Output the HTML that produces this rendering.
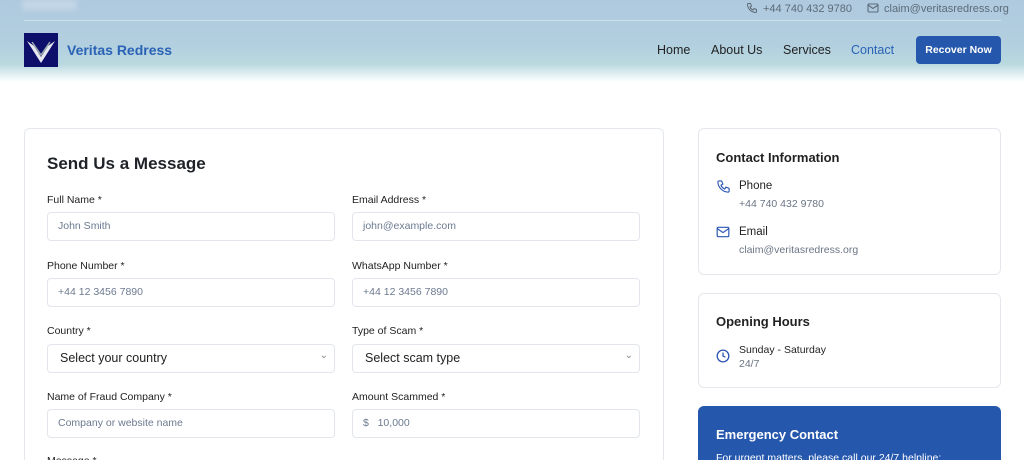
<!DOCTYPE html>
<html style="height:460px;overflow:hidden"><head><meta charset="utf-8"><style>
*{box-sizing:border-box;margin:0;padding:0}
body{width:1024px;height:460px;overflow:hidden;background:#fff;font-family:"Liberation Sans",sans-serif;position:relative}
.hdr{position:absolute;left:0;top:0;width:1024px;height:82px;background:linear-gradient(180deg,#afc9df 0%,#b2cfdf 55%,#b9d9df 78%,#fff 100%)}
.a{position:absolute}
.line{left:24px;top:20px;width:977px;height:1px;background:#cfe0ea}
.logo{left:24px;top:33px;width:34px;height:34px;background:#0d0f6b}
.brand{left:67px;top:42px;font-size:14px;font-weight:bold;color:#2a62b5}
.nav{top:43px;font-size:12.5px;color:#222}
.btn{left:916px;top:36px;width:85px;height:28px;background:#2557ad;border-radius:4px;color:#fff;font-size:10.5px;font-weight:bold;text-align:center;line-height:28px}
.tc{top:3px;font-size:11px;color:#5c6b78}
.card{background:#fff;border:1px solid #e4e7ec;border-radius:6px}
.lbl{font-size:10.5px;color:#222}
.in{width:288px;height:29px;border:1px solid #e2e6ec;border-radius:4px;font-size:10.5px;color:#6c7a90;padding-left:10px;line-height:27px;background:#fff}
.sel{color:#222;font-size:12.5px;padding-left:12px}
.sel:after{content:"⌄";position:absolute;right:6px;top:-3px;font-size:10px;color:#888}
.h3{font-size:13px;font-weight:bold;color:#222}
.t1{font-size:11.5px;color:#222}
.t2{font-size:10.5px;color:#6b7585}
</style></head><body>
<div class="hdr"></div>
<div class="a" style="left:22px;top:0;width:55px;height:10px;background:#c4d6e6;filter:blur(3px)"></div>
<div class="a line"></div>
<svg class="a" style="left:746px;top:2px" width="12" height="12" viewBox="0 0 24 24" fill="none" stroke="#5c6b78" stroke-width="2"><path d="M5 3h4l2 5-3 2a11 11 0 0 0 6 6l2-3 5 2v4a2 2 0 0 1-2 2A17 17 0 0 1 3 5a2 2 0 0 1 2-2z"/></svg>
<div class="a tc" style="left:763px">+44 740 432 9780</div>
<svg class="a" style="left:867px;top:3px" width="12" height="10" viewBox="0 0 24 20" fill="none" stroke="#5c6b78" stroke-width="2.2"><rect x="2" y="2" width="20" height="16" rx="2"/><path d="M2 4l10 7 10-7"/></svg>
<div class="a tc" style="left:884px">claim@veritasredress.org</div>
<div class="a logo"><svg width="34" height="34" viewBox="0 0 34 34"><path d="M3 8 L17 30 L31 8 L24 13 L17 24 L10 13 Z" fill="#e8e8f0"/><path d="M8 9 L17 22 L26 9" fill="none" stroke="#9aa" stroke-width="1.5"/></svg></div>
<div class="a brand">Veritas Redress</div>
<div class="a nav" style="left:657px">Home</div>
<div class="a nav" style="left:711px">About Us</div>
<div class="a nav" style="left:783px">Services</div>
<div class="a nav" style="left:851px;color:#2a62b5">Contact</div>
<div class="a btn">Recover Now</div>

<div class="a card" style="left:24px;top:128px;width:640px;height:360px"></div>
<div class="a" style="left:47px;top:154px;font-size:17px;font-weight:bold;color:#1f2328">Send Us a Message</div>
<div class="a lbl" style="left:47px;top:194px">Full Name *</div>
<div class="a lbl" style="left:352px;top:194px">Email Address *</div>
<div class="a in" style="left:47px;top:212px">John Smith</div>
<div class="a in" style="left:352px;top:212px">john@example.com</div>
<div class="a lbl" style="left:47px;top:260px">Phone Number *</div>
<div class="a lbl" style="left:352px;top:260px">WhatsApp Number *</div>
<div class="a in" style="left:47px;top:278px">+44 12 3456 7890</div>
<div class="a in" style="left:352px;top:278px">+44 12 3456 7890</div>
<div class="a lbl" style="left:47px;top:325px">Country *</div>
<div class="a lbl" style="left:352px;top:325px">Type of Scam *</div>
<div class="a in sel" style="left:47px;top:344px">Select your country</div>
<div class="a in sel" style="left:352px;top:344px">Select scam type</div>
<div class="a lbl" style="left:47px;top:391px">Name of Fraud Company *</div>
<div class="a lbl" style="left:352px;top:391px">Amount Scammed *</div>
<div class="a in" style="left:47px;top:409px">Company or website name</div>
<div class="a in" style="left:352px;top:409px">$&nbsp;&nbsp;&nbsp;10,000</div>
<div class="a lbl" style="left:47px;top:455px">Message *</div>

<div class="a card" style="left:698px;top:128px;width:303px;height:147px"></div>
<div class="a h3" style="left:716px;top:150px">Contact Information</div>
<svg class="a" style="left:716px;top:179px" width="15" height="15" viewBox="0 0 24 24" fill="none" stroke="#2a55b0" stroke-width="1.8"><path d="M5 3h4l2 5-3 2a11 11 0 0 0 6 6l2-3 5 2v4a2 2 0 0 1-2 2A17 17 0 0 1 3 5a2 2 0 0 1 2-2z"/></svg>
<div class="a t1" style="left:739px;top:180px">Phone</div>
<div class="a t2" style="left:739px;top:198px">+44 740 432 9780</div>
<svg class="a" style="left:716px;top:226px" width="14" height="12" viewBox="0 0 24 20" fill="none" stroke="#2a55b0" stroke-width="2"><rect x="2" y="2" width="20" height="16" rx="2"/><path d="M2 4l10 7 10-7"/></svg>
<div class="a t1" style="left:739px;top:226px">Email</div>
<div class="a t2" style="left:739px;top:244px">claim@veritasredress.org</div>

<div class="a card" style="left:698px;top:293px;width:303px;height:95px"></div>
<div class="a h3" style="left:716px;top:314px">Opening Hours</div>
<svg class="a" style="left:716px;top:349px" width="14" height="14" viewBox="0 0 24 24" fill="none" stroke="#2a55b0" stroke-width="2.2"><circle cx="12" cy="12" r="10"/><path d="M12 6v6l4 2"/></svg>
<div class="a" style="left:739px;top:344px;font-size:10.5px;color:#222">Sunday - Saturday</div>
<div class="a t2" style="left:739px;top:358px">24/7</div>

<div class="a" style="left:698px;top:406px;width:303px;height:80px;background:#2557ad;border-radius:6px"></div>
<div class="a" style="left:716px;top:427px;font-size:13px;font-weight:bold;color:#fff">Emergency Contact</div>
<div class="a" style="left:716px;top:452px;font-size:10.5px;color:#fff">For urgent matters, please call our 24/7 helpline:</div>
</body></html>
